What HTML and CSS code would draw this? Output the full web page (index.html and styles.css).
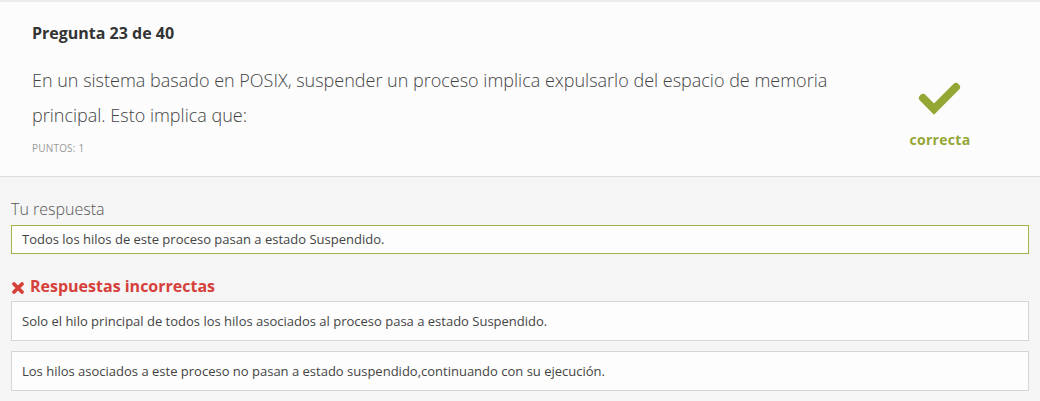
FILE: index.html
```html
<!DOCTYPE html>
<html lang="es">
<head>
<meta charset="utf-8">
<link rel="stylesheet" href="styles.css">
</head>
<body>
<div class="page">
  <header class="question">
    <div class="question-main">
      <h2 class="q-number">Pregunta 23 de 40</h2>
      <p class="q-text">En un sistema basado en POSIX, suspender un proceso implica expulsarlo del espacio de memoria principal. Esto implica que:</p>
      <div class="q-points">PUNTOS: 1</div>
    </div>
    <div class="q-status">
      <svg class="check" width="44" height="34" viewBox="0 0 44 34">
        <polyline points="5,16 16,27 38,5" fill="none" stroke="#94a735" stroke-width="8" stroke-linecap="round" stroke-linejoin="miter"/>
      </svg>
      <div class="status-label">correcta</div>
    </div>
  </header>
  <section class="answers">
    <div class="your-label">Tu respuesta</div>
    <div class="answer answer-yours">Todos los hilos de este proceso pasan a estado Suspendido.</div>
    <div class="wrong-title">
      <svg class="cross" width="14" height="14" viewBox="0 0 14 14">
        <path d="M3 3 L11 11 M11 3 L3 11" stroke="#d6403a" stroke-width="3.8" stroke-linecap="round"/>
      </svg>
      <span>Respuestas incorrectas</span>
    </div>
    <div class="answer answer-wrong">Solo el hilo principal de todos los hilos asociados al proceso pasa a estado Suspendido.</div>
    <div class="answer answer-wrong">Los hilos asociados a este proceso no pasan a estado suspendido,continuando con su ejecución.</div>
  </section>
</div>
</body>
</html>
```
FILE: styles.css
```css
html, body {
  margin: 0;
  padding: 0;
}
body {
  font-family: "Open Sans", "Liberation Sans", sans-serif;
  background: #f5f5f5;
  color: #444;
}
.page {
  width: 1040px;
}
.question {
  display: flex;
  background: #fcfcfc;
  border-top: 2px solid #ebebeb;
  border-bottom: 1px solid #dcdcdc;
  box-sizing: border-box;
  height: 177px;
}
.question-main {
  flex: 1;
  padding: 20px 0 0 32px;
}
.q-number {
  margin: 0;
  font-size: 16px;
  font-weight: 700;
  color: #333;
  line-height: 22px;
}
.q-text {
  margin: 19px 0 0;
  font-size: 18px;
  font-weight: 300;
  color: #444;
  line-height: 35px;
  max-width: 820px;
}
.q-points {
  margin-top: 8px;
  font-size: 10px;
  color: #999;
  letter-spacing: 0.2px;
}
.q-status {
  width: 180px;
  display: flex;
  flex-direction: column;
  align-items: center;
  padding-top: 80px;
  padding-right: 20px;
  box-sizing: border-box;
}
.check {
  display: block;
}
.status-label {
  margin-top: 14px;
  font-size: 14px;
  font-weight: 700;
  color: #94a735;
  letter-spacing: 0.3px;
}
.answers {
  padding: 22px 11px 10px 11px;
}
.your-label {
  font-size: 16px;
  font-weight: 300;
  color: #555;
  line-height: 20px;
}
.answer {
  font-size: 13px;
  color: #444;
  background: #fdfdfd;
  padding: 0 10px;
  box-sizing: border-box;
}
.answer-yours {
  margin-top: 6px;
  height: 29px;
  line-height: 27px;
  border: 1px solid #a4b24c;
}
.wrong-title {
  display: flex;
  align-items: center;
  gap: 5px;
  margin-top: 22px;
  font-size: 16px;
  font-weight: 700;
  color: #d6403a;
  line-height: 20px;
}
.cross {
  margin-top: 3px;
}
.answer-wrong {
  margin-top: 5px;
  height: 40px;
  line-height: 38px;
  border: 1px solid #d5d5d5;
}
.answer-wrong + .answer-wrong {
  margin-top: 10px;
}
```
